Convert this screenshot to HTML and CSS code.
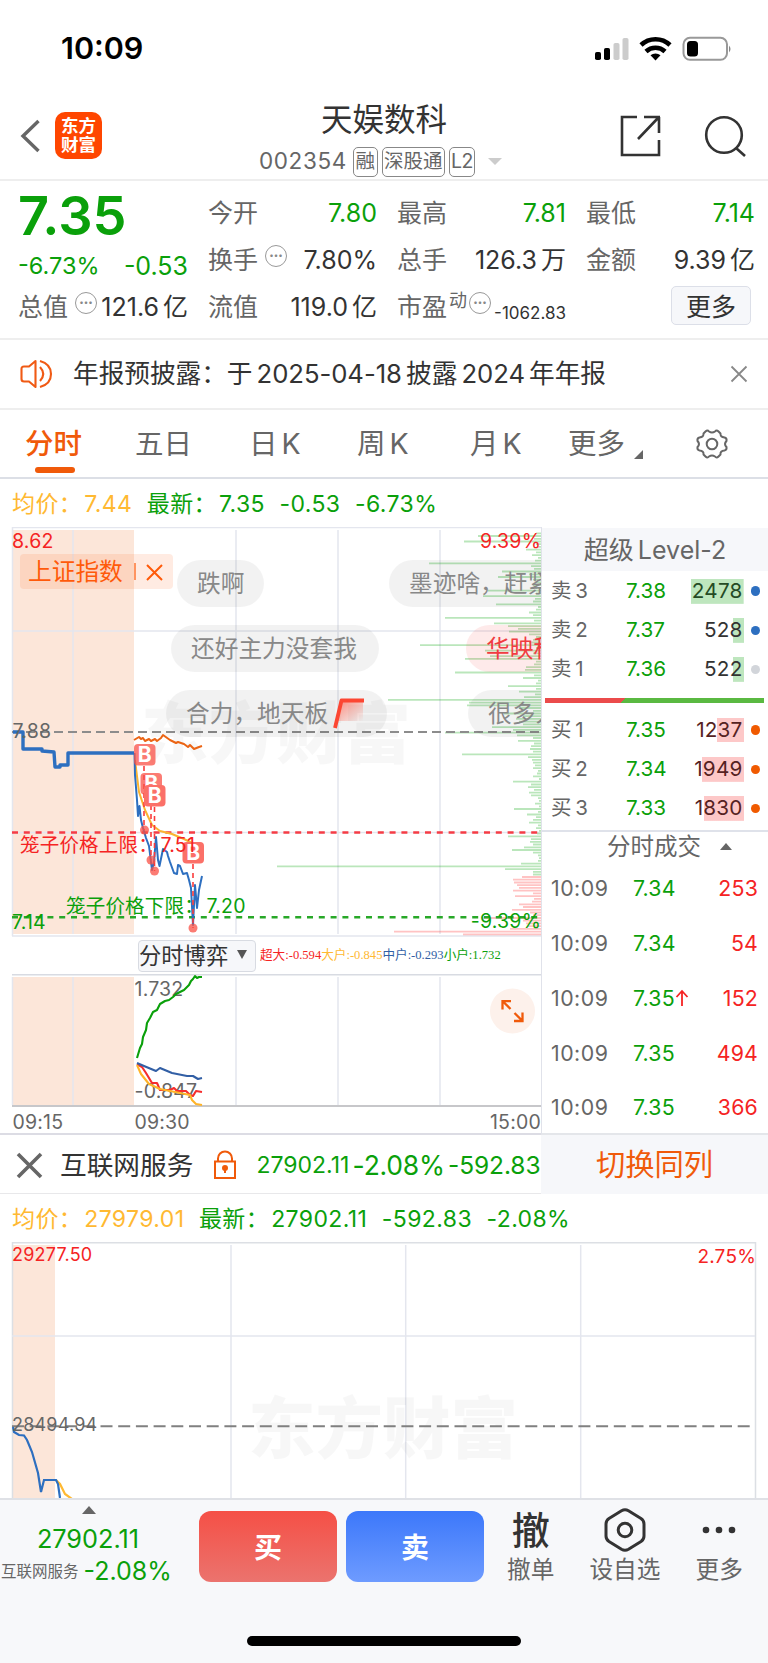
FILE: index.html
```
<!DOCTYPE html>
<html lang="zh-CN">
<head>
    <meta charset="UTF-8">
    <meta name="viewport" content="width=device-width, initial-scale=1.0">
    <title>天娱数科 002354</title>
    <link rel="stylesheet" href="styles.css">
</head>
<body>
    <div class="statusbar">
        <span class="clock">10:09</span>
        <svg width="140" height="26" viewBox="0 0 140 26">
            <rect x="1" y="16" width="6" height="8" rx="1.8"/>
            <rect x="10" y="12" width="6" height="12" rx="1.8"/>
            <rect x="19.500" y="7" width="6" height="17" rx="1.800" fill="#ccc"/>
            <rect x="28.500" y="2" width="6" height="22" rx="1.800" fill="#ccc"/>
            <g fill="none" stroke="#000" stroke-width="4.600">
                <path d="M47 9a21 21 0 0 1 29 0"/>
                <path d="M52 15.500a14 14 0 0 1 19 0"/>
            </g>
            <path d="M61.500 24.500l-5-5.200a7.500 7.500 0 0 1 10 0z"/>
            <rect x="89.500" y="1.800" width="43.500" height="22" rx="6.500" fill="none" stroke="#999" stroke-width="2"/>
            <rect x="93" y="5" width="11" height="15.500" rx="3.500"/>
            <path d="M135 9.500q3 3.300 0 7z" fill="#888"/>
        </svg>
    </div>

    <header class="header">
        <div class="header-left">
            <svg width="20" height="34" viewBox="0 0 20 34" fill="none" stroke="#666" stroke-width="3.400"><path d="M18.500 2L3 17l15.500 15"/></svg>
            <div class="logo">东方<br>财富</div>
        </div>
        <div class="header-title">
            <h1>天娱数科</h1>
            <div class="sub"><span class="code">002354</span><i>融</i><i>深股通</i><i class="l2">L2</i><b class="tri-down"></b></div>
        </div>
        <div class="header-right">
            <svg width="42" height="42" viewBox="0 0 42 42" fill="none" stroke="#333" stroke-width="2.600"><path d="M17 2H2v38h37V25M24 2h16M39 2v16M38 3L18 24"/></svg>
            <svg width="44" height="42" viewBox="0 0 44 42" fill="none" stroke="#333" stroke-width="2.600"><circle cx="20" cy="20" r="17.800"/><path d="M32 33l9 8"/></svg>
        </div>
    </header>

    <section class="quote">
        <div class="price">7.35</div>
        <div class="cell"><label>今开</label><span class="green">7.80</span></div>
        <div class="cell"><label>最高</label><span class="green">7.81</span></div>
        <div class="cell"><label>最低</label><span class="green">7.14</span></div>
        <div class="cell change green"><span>-6.73%</span><span>-0.53</span></div>
        <div class="cell"><label>换手</label><em class="dots">•••</em><span>7.80%</span></div>
        <div class="cell"><label>总手</label><span>126.3<u>万</u></span></div>
        <div class="cell"><label>金额</label><span>9.39<u>亿</u></span></div>
        <div class="cell"><label>总值</label><em class="dots">•••</em><span>121.6<u>亿</u></span></div>
        <div class="cell"><label>流值</label><span>119.0<u>亿</u></span></div>
        <div class="cell"><label>市盈</label><sup>动</sup><em class="dots">•••</em><span class="small">-1062.83</span></div>
        <div class="cell"><button class="more">更多</button></div>
    </section>

    <section class="notice">
        <svg width="34" height="30" viewBox="0 0 34 30" fill="none" stroke="#f05a14" stroke-width="2.100"><path d="M15.500 2L9 7.500H4Q1.500 7.500 1.500 10v10q0 2.500 2.500 2.500h5l6.500 5.500zM20 8q6.500 7 0 14M20 2q11 3 11 13t-11 13" stroke-linejoin="round"/></svg>
        <p>年报预披露：于 2025-04-18 披露 2024 年年报</p>
        <svg width="18" height="18" viewBox="0 0 18 18" stroke="#888" stroke-width="1.800"><path d="M1.500 1.500l15 15M16.500 1.500l-15 15"/></svg>
    </section>

    <nav class="tabs">
        <a class="active">分时</a>
        <a>五日</a>
        <a>日<span>K</span></a>
        <a>周<span>K</span></a>
        <a>月<span>K</span></a>
        <a>更多<b class="corner"></b></a>
        <svg width="34" height="32" viewBox="0 0 34 32" fill="none" stroke="#666" stroke-width="2"><path d="M10.500 3.500Q12.500 1.500 14 3.500Q17 5.500 20 3.500Q21.500 1.500 23.500 3.500L25.500 5.500Q25 9 29.500 9.500Q32 10 31.500 13Q28.500 16 31.500 19Q32 22 29.500 22.500Q25 23 25.500 26.500L23.500 28.500Q21.500 30.500 20 28.500Q17 26.500 14 28.500Q12.500 30.500 10.500 28.500L8.500 26.500Q9 23 4.500 22.500Q2 22 2.500 19Q5.500 16 2.500 13Q2 10 4.500 9.500Q9 9 8.500 5.500Z" stroke-linejoin="round"/><circle cx="17" cy="16" r="5.300"/></svg>
    </nav>

    <div class="legend green">
        <span class="yellow">均价：<span>7.44</span></span>
        <span>最新：<span>7.35</span></span>
        <span>-0.53</span>
        <span>-6.73%</span>
    </div>

    <main class="board">
        <div class="charts">
            <div class="plot">
                <svg width="541" height="410" viewBox="0 527 541 410">
                    <rect x="12" y="530" width="122" height="404" fill="#fce6d9"/>
                    <g stroke="#e4e6ee" stroke-width="1.500" fill="none">
                        <path d="M12.500 936V527.500H541M12 936H541"/>
                        <path d="M73 530V934M236 530V934M338 530V934M440 530V934M12 631H541M12 832.500H541"/>
                    </g>
                    <text x="141" y="758" class="watermark">东方财富</text>
                    <path id="sellBars" stroke="#07a40a" stroke-opacity=".28" stroke-width="1.800"/>
                    <path id="buyBars" stroke="#ff2828" stroke-opacity=".28" stroke-width="1.800"/>
                    <path d="M12 732H541" stroke="#8c8c8c" stroke-width="2" stroke-dasharray="9 5"/>
                    <path d="M12 832.500H541" stroke="#f53c46" stroke-width="2.400" stroke-dasharray="6 5.800"/>
                    <path d="M12 917.300H541" stroke="#28a828" stroke-width="2.400" stroke-dasharray="6 5.800"/>
                    <g fill="none" stroke-linejoin="round">
                        <path stroke="#eb6414" stroke-width="2" d="M134 740l5-3 2 2 2-1 2 3 4-2 2 2 4-2 2 2 4-3 2-3 7 5 6 3 2-1 6 2 4 3 2-2 4 4 5-2 3-1"/>
                        <path stroke="#fab432" stroke-width="2" d="M135 760L139 792 145 810 152 825 160 831 172 834 184 839 192 843 200 853"/>
                        <path stroke="#2d6fc0" stroke-width="3.400" d="M13 732H23V749H42V751L54 752 55 767H60V765H68V753H134"/>
                        <path stroke="#2d6fc0" stroke-width="2" d="M134.500 753L135 775 137 800 138 816 139.500 806 141 820 143 828 146 838 149 846 152 870 154 862 156 837 158 860 159.500 866 163 849 167 852 168 856 170 862 174 873 177 874 178 865 180 866 183 874 187 873 189 880 191 888 193 925 195 885 197 908 199 890 202 876"/>
                    </g>
                    <g fill="#fa5046" fill-opacity=".75">
                        <path d="M144 766V830M151 796V860M154.500 807V871M193 864V928" stroke="#fa3c3c" stroke-width="1.600" stroke-dasharray="5 4"/>
                        <circle cx="144.500" cy="830" r="4.500"/><circle cx="151" cy="860" r="4.500"/><circle cx="154.500" cy="871" r="4.500"/><circle cx="193" cy="928" r="4.500"/>
                        <rect x="134" y="744" width="21.500" height="21.500" rx="4"/><rect x="140.500" y="773" width="21.500" height="21.500" rx="4"/>
                    </g>
                    <g class="mark"><text x="144.700" y="762.300">B</text><text x="151.200" y="791.300">B</text></g>
                    <rect x="144" y="785" width="21.500" height="21.500" rx="4" fill="#fb7068"/>
                    <rect x="182.500" y="842" width="21.500" height="21.500" rx="4" fill="#fb7068"/>
                    <g class="mark"><text x="154.700" y="803.300">B</text><text x="193.200" y="860.300">B</text></g>
                    <g class="axis">
                        <text x="12" y="547.500" class="red">8.62</text>
                        <text x="541" y="547.500" class="red end">9.39%</text>
                        <text x="12.500" y="737.500">7.88</text>
                        <text x="12" y="928.500" class="green tight">7.14</text>
                        <text x="541" y="928" class="green end">-9.39%</text>
                        <text x="20" y="852" class="red">笼子价格上限：</text><text x="160.500" y="852" class="red">7.51</text>
                        <text x="66" y="913" class="green">笼子价格下限：</text><text x="206.500" y="913" class="green">7.20</text>
                    </g>
                </svg>
                <div class="index-tag">上证指数<svg width="34" height="20" viewBox="0 0 34 20" stroke="#ff5a0a" stroke-width="2" fill="none"><path d="M4 1v17" stroke-opacity=".6"/><path d="M16 3l15 15M31 3L16 18"/></svg></div>
                <span class="pill p1">跌啊</span>
                <span class="pill p2">墨迹啥，赶紧</span>
                <span class="pill p3">还好主力没套我</span>
                <span class="pill p4 hot">华映科技</span>
                <span class="pill p5">合力，地天板<svg width="34" height="34" viewBox="0 0 34 34"><defs><linearGradient id="fade" x1="0" y1="0" x2="1" y2="1"><stop offset="0" stop-color="#ff5a46" stop-opacity=".7"/><stop offset="1" stop-color="#ff5a46" stop-opacity="0"/></linearGradient></defs><path d="M8 3h23v21H4z" fill="url(#fade)"/><path d="M3 31L9.500 3.500H32" fill="none" stroke="#fc4632" stroke-width="3.800" stroke-linejoin="round"/></svg></span>
                <span class="pill p6">很多人</span>
            </div>
            <div class="game-row">
                <button>分时博弈<b class="tri-down dark"></b></button>
                <p><span class="red">超大:-0.594</span><span class="yellow">大户:-0.845</span><span class="navy">中户:-0.293</span><span class="green">小户:1.732</span></p>
            </div>
            <div class="plot">
                <svg width="541" height="161" viewBox="0 974 541 161">
                    <rect x="12" y="977" width="122" height="128" fill="#fce6d9"/>
                    <g stroke="#e4e6ee" stroke-width="1.500">
                        <path d="M12 974.700H541" stroke="#d8dbe2"/>
                        <path d="M12.500 977V1105M73 977V1105M236 977V1105M338 977V1105M440 977V1105"/>
                        <path d="M12 1106H541" stroke="#b4b4b8"/>
                    </g>
                    <g class="axis">
                        <text x="134.500" y="995.500">1.732</text>
                        <text x="134.500" y="1098">-0.847</text>
                        <text x="12.500" y="1129">09:15</text>
                        <text x="134.500" y="1129">09:30</text>
                        <text x="541" y="1129" class="end">15:00</text>
                    </g>
                    <g fill="none" stroke-width="2.100" stroke-linejoin="round">
                        <path stroke="#0aa00a" d="M137 1058L140 1048 142 1044 143 1037 146 1030 147 1023 150 1018 153 1012 157 1010 160 1004 165 1001 169 1000 173 997 176 994 184 990 189 985 191 981 193 979 195 976 197 978 199 977 202 977"/>
                        <path stroke="#f52d2d" d="M137 1064L142 1067 146 1073 152 1083 157 1083 160 1090 170 1090 174 1088 177 1091 186 1091 190 1095 193 1096 196 1091 202 1092"/>
                        <path stroke="#ffb428" d="M137 1065L141 1074 149 1084 160 1089 175 1092 190 1095 192 1100 196 1104 202 1105"/>
                        <path stroke="#325fa5" d="M137 1063L144 1066 156 1071 160 1068 172 1073 187 1076 193 1076 198 1079 202 1078"/>
                    </g>
                    <circle cx="512.500" cy="1011" r="22.500" fill="#fdf1eb"/>
                    <path d="M510.500 1009L503 1001.500M502.500 1009.500V1001.200H511M514.500 1013L522 1020.500M522.500 1012.500V1021H514" fill="none" stroke="#f05a0a" stroke-width="2.300"/>
                </svg>
            </div>
        </div>

        <aside class="level">
            <h2>超级 Level-2</h2>
            <ul class="orders">
                <li><label>卖 3</label><span class="green">7.38</span><span class="vol sell v1">2478</span><b class="blue"></b></li>
                <li><label>卖 2</label><span class="green">7.37</span><span class="vol sell v2">528</span><b class="blue"></b></li>
                <li><label>卖 1</label><span class="green">7.36</span><span class="vol sell v3">522</span><b></b></li>
            </ul>
            <div class="ratio"></div>
            <ul class="orders">
                <li><label>买 1</label><span class="green">7.35</span><span class="vol buy v4">1237</span><b class="orange"></b></li>
                <li><label>买 2</label><span class="green">7.34</span><span class="vol buy v5">1949</span><b class="orange"></b></li>
                <li><label>买 3</label><span class="green">7.33</span><span class="vol buy v6">1830</span><b class="orange"></b></li>
            </ul>
            <h3>分时成交<b class="tri-up"></b></h3>
            <ul class="ticks">
                <li><span>10:09</span><span class="green">7.34</span><span class="red">253</span></li>
                <li><span>10:09</span><span class="green">7.34</span><span class="red">54</span></li>
                <li><span>10:09</span><span class="green">7.35<svg width="14" height="18" viewBox="0 0 14 18" fill="none" stroke="#f52323" stroke-width="1.800"><path d="M7 17V2M1.500 8L7 2l5.500 6"/></svg></span><span class="red">152</span></li>
                <li><span>10:09</span><span class="green">7.35</span><span class="red">494</span></li>
                <li><span>10:09</span><span class="green">7.35</span><span class="red">366</span></li>
            </ul>
        </aside>
    </main>

    <div class="compare">
        <div class="compare-left">
            <svg width="27" height="27" viewBox="0 0 27 27" stroke="#666" stroke-width="3.600"><path d="M2 2l23 23M25 2L2 25"/></svg>
            <strong>互联网服务</strong>
            <svg width="24" height="30" viewBox="0 0 24 30" fill="none" stroke="#f05a0a" stroke-width="2"><path d="M2 11.500h20V28H2zM5 11V8.500a7 7 0 0 1 14 0V11"/><circle cx="12" cy="18" r="2" fill="#f05a0a"/><path d="M12 18v5"/></svg>
            <div class="nums green"><span>27902.11</span><span>-2.08%</span><span>-592.83</span></div>
        </div>
        <div class="switch">切换同列</div>
    </div>

    <div class="legend second green">
        <span class="yellow">均价：<span>27979.01</span></span>
        <span>最新：<span>27902.11</span></span>
        <span>-592.83</span>
        <span>-2.08%</span>
    </div>

    <svg class="sector" width="768" height="256" viewBox="0 1242 768 256">
        <rect x="12" y="1245" width="43" height="253" fill="#fce6d9"/>
        <g stroke="#e4e6ee" stroke-width="1.500" fill="none">
            <path d="M12.500 1498V1242.700H755.500V1498" stroke="#dcdfe4"/>
            <path d="M231 1245V1498M405.700 1245V1498M580.700 1245V1498M12 1336H755"/>
        </g>
        <text x="248" y="1453" class="watermark">东方财富</text>
        <path d="M12 1426.300H755" stroke="#808080" stroke-width="2" stroke-dasharray="12 5.700"/>
        <g fill="none" stroke-width="2.200">
            <path stroke="#ffb932" d="M56 1480L60 1484 65 1494 72 1499"/>
            <path stroke="#2d6fc0" d="M13 1427L14 1432 19 1435 24 1435.500 27 1440 32 1452 38 1473 41 1492 44 1480 56 1480 58 1484 60 1498"/>
        </g>
        <g class="axis small-axis">
            <text x="12" y="1261" class="red">29277.50</text>
            <text x="756" y="1262.500" class="red end pct">2.75%</text>
            <text x="12" y="1430.500">28494.94</text>
        </g>
    </svg>

    <footer class="bottom">
        <div class="trade">
            <div class="index">
                <b class="tri-up"></b>
                <div class="green big">27902.11</div>
                <div class="line"><small>互联网服务</small><span class="green">-2.08%</span></div>
            </div>
            <button class="buy-btn">买</button>
            <button class="sell-btn">卖</button>
            <div class="action a1"><div class="glyph">撤</div>撤单</div>
            <div class="action a2"><svg width="42" height="44" viewBox="0 0 42 44" fill="none" stroke="#333" stroke-width="3"><path d="M17.500 2.800Q21 .800 24.500 2.800L37 10.500Q40 12.500 40 16v12q0 3.500-3 5.500L24.500 41.200q-3.500 2-7 0L5 33.500Q2 31.500 2 28V16q0-3.500 3-5.500z"/><circle cx="21" cy="22" r="6.800"/></svg>设自选</div>
            <div class="action a3"><svg width="42" height="44" viewBox="0 0 42 44" fill="#333"><circle cx="8" cy="22" r="3.300"/><circle cx="21" cy="22" r="3.300"/><circle cx="34" cy="22" r="3.300"/></svg>更多</div>
        </div>
        <div class="home"></div>
    </footer>

    <script src="script.js"></script>
</body>
</html>
```

FILE: styles.css
```
* {
    box-sizing: border-box;
}
body {
    width: 768px;
    margin: 0;
    background: #fff;
    color: #333;
    font-family: Inter, "Noto Sans CJK SC", sans-serif;
    font-size: 24px;
    line-height: 1;
    overflow-x: hidden;
}
h1, h2, h3, p, ul {
    margin: 0;
    padding: 0;
    font-weight: 400;
}
ul { list-style: none; }
i, em, u { font-style: normal; text-decoration: none; }
svg { display: block; flex: none; }
button { font-family: inherit; padding: 0; border: 0; color: inherit; white-space: nowrap; }
span, label, strong { white-space: nowrap; }
.green { color: #0aa00a; fill: #0aa00a; }
.red { color: #f52323; fill: #f52323; }
.yellow { color: #ffb932; }
.navy { color: #325fa5; }

.tri-down, .tri-up {
    width: 0;
    height: 0;
    border: 7px solid transparent;
    border-bottom: 0;
    border-top-color: #ccc;
}
.tri-down.dark { border-width: 9px 5px 0; border-top-color: #555; }
.tri-up {
    border: 6px solid transparent;
    border-top: 0;
    border-bottom-color: #666;
}

/* status bar and header */
.statusbar {
    height: 92px;
    padding: 5px 34px 0 61px;
    display: flex;
    align-items: center;
    justify-content: space-between;
}
.clock {
    font-size: 30.500px;
    font-weight: 600;
    color: #000;
}
.header {
    height: 89px;
    padding: 0 20px;
    display: grid;
    grid-template-columns: 183px 1fr 183px;
    border-bottom: 2px solid #eee;
}
.header-left { display: flex; align-items: center; gap: 15px; }
.logo {
    width: 47px;
    height: 47px;
    border-radius: 10px;
    background: #ff4600;
    color: #fff;
    font-size: 17.5px;
    font-weight: 700;
    line-height: 19px;
    text-align: center;
    padding-top: 4px;
}
.header-title { text-align: center; padding-top: 10px; }
.header-title h1 { font-size: 31.500px; line-height: 36px; }
.sub {
    display: flex;
    align-items: center;
    margin-top: 8px;
    padding-left: 56px;
    height: 31px;
    font-size: 22.500px;
    color: #666;
}
.code { width: 94px; text-align: left; letter-spacing: .600px; }
.sub i {
    height: 30px;
    line-height: 27px;
    padding: 0 1.500px;
    margin-right: 4px;
    border: 1.500px solid #888;
    border-radius: 5px;
    font-size: 19.500px;
    white-space: nowrap;
}
.sub .l2 { padding: 0 1px; letter-spacing: -.500px; }
.sub .tri-down { margin-left: 9px; }
.header-right { display: flex; align-items: center; justify-content: flex-end; gap: 42px; }

/* quote grid */
.quote {
    height: 159px;
    padding: 8px 13px 7px 18px;
    display: grid;
    grid-template-columns: 170px repeat(3, 169px);
    grid-template-rows: 48px 47px 47px;
    column-gap: 20px;
    border-bottom: 2px solid #eee;
}
.price {
    color: #0aa00a;
    font-size: 54px;
    font-weight: 600;
    line-height: 54px;
}
.cell { display: flex; align-items: center; font-size: 25px; }
.cell label { font-size: 25px; color: #666; }
.cell > span:last-child { margin-left: auto; }
.cell u { font-size: 25px; margin-left: 4px; }
.change { padding-top: 11px; }
.change span:first-child { font-size: 23.500px; }
.dots {
    width: 22px;
    height: 22px;
    margin: -10px 0 0 7px;
    border: 1.600px solid #999;
    border-radius: 50%;
    color: #888;
    font-size: 8px;
    line-height: 18px;
    text-align: center;
}
.cell sup { font-size: 18px; color: #666; margin: -14px -5px 0 2px; line-height: 1; }
.cell .small { font-size: 17px; padding-top: 12px; }
.more {
    width: 80px;
    height: 39px;
    margin: -5px 4px 0 auto;
    background: #f6f7fa;
    border: 1.500px solid #dcdfe8;
    border-radius: 5px;
    font-size: 25px;
}

/* notice */
.notice {
    height: 70px;
    padding: 0 20px;
    display: flex;
    align-items: center;
    border-bottom: 2px solid #eee;
}
.notice p { flex: 1; padding-left: 19px; font-size: 25.700px; word-spacing: -3px; letter-spacing: -.060px; }

/* period tabs */
.tabs {
    height: 69px;
    padding: 0 0 0 25px;
    display: grid;
    grid-template-columns: 110px 114px 108px 113px 98px 127px 40px;
    align-items: center;
    border-bottom: 2px solid #dcdfe6;
    font-size: 28.500px;
    color: #666;
}
.tabs a { display: flex; align-items: center; height: 67px; padding-top: 1px; position: relative; }
.tabs a span { margin-left: 4px; }
.tabs .active { color: #f05a0a; font-weight: 500; }
.tabs .active::after {
    content: "";
    position: absolute;
    left: 10px;
    bottom: 4px;
    width: 40px;
    height: 6px;
    border-radius: 3px;
    background: #f05a0a;
}
.corner {
    align-self: flex-end;
    margin: 0 0 18px 9px;
    border-left: 9px solid transparent;
    border-bottom: 9px solid #666;
}

.legend {
    height: 48px;
    padding: 2px 12px 0;
    display: flex;
    align-items: center;
    gap: 14.500px;
    font-size: 23px;
    letter-spacing: .400px;
}
.legend span span { margin-left: 2px; }

/* chart board */
.board { display: flex; height: 608px; }
.charts { width: 541px; border-bottom: 2px solid #dcdce4; }
.plot { position: relative; overflow: hidden; }
.axis { font-size: 19.500px; fill: #666; letter-spacing: .200px; }
.small-axis { font-size: 18px; }
.pct { font-size: 19px; }
.end { text-anchor: end; }
.watermark { font: 900 67.500px "Noto Sans CJK SC", sans-serif; fill: #000; fill-opacity: .03; }
.mark { font-size: 21px; font-weight: 700; fill: #fff; text-anchor: middle; }
.index-tag {
    position: absolute;
    left: 20px;
    top: 27px;
    width: 153px;
    height: 35px;
    padding-left: 8px;
    display: flex;
    align-items: center;
    gap: 8px;
    border-radius: 4px;
    background: rgba(255, 90, 20, .12);
    color: #ff5a0a;
    font-size: 23.700px;
    white-space: nowrap;
}
.pill {
    position: absolute;
    height: 47px;
    padding: 0 20px;
    display: flex;
    align-items: center;
    border-radius: 24px;
    background: rgba(0, 0, 0, .05);
    color: #888;
    font-size: 23.700px;
}
.pill svg { margin-left: 4px; }
.hot { background: rgba(245, 50, 50, .1); color: #f03c41; }
.p1 { left: 177px; top: 33px; width: 87px; }
.p2 { left: 389px; top: 33px; }
.p3 { left: 171px; top: 98px; width: 208px; }
.p4 { left: 466px; top: 98px; }
.p5 { left: 166px; top: 163px; width: 221px; }
.p6 { left: 468px; top: 163px; }

.game-row {
    height: 37px;
    padding: 3px 0 3px 138px;
    display: flex;
    align-items: center;
    gap: 4px;
}
.game-row button {
    width: 118px;
    height: 32px;
    padding-bottom: 3px;
    display: flex;
    align-items: center;
    gap: 9px;
    background: #f6f7fa;
    border: 1.500px solid #d8dbe2;
    border-radius: 4px;
    font-size: 22.300px;
}
.game-row p { font-family: "Liberation Serif", "Noto Sans CJK SC", serif; font-size: 12.600px; display: flex; }

/* level-2 panel */
.level { width: 227px; border-left: 1.500px solid #e0e2ea; border-bottom: 2px solid #e4e6ea; }
.level h2 {
    height: 43px;
    margin-top: 1px;
    line-height: 44px;
    background: #f6f7fa;
    color: #666;
    font-size: 25px;
    word-spacing: -3px;
    text-align: center;
}
.orders li {
    height: 39.300px;
    padding: 1px 8px 0 9px;
    display: flex;
    align-items: center;
    font-size: 20.700px;
}
.orders label { width: 75px; color: #666; font-size: 20.500px; word-spacing: -2px; }
.orders b { width: 9.500px; height: 9.500px; border-radius: 50%; background: #d2d5da; margin-left: 7px; }
.orders .blue { background: #2d6fc0; }
.orders .orange { background: #f05a00; }
.vol { margin-left: auto; padding: 2px 1px; letter-spacing: .200px; background-repeat: no-repeat; background-position: right center; }
.sell { background-image: linear-gradient(#bee6be, #bee6be); color: #254a25; }
.buy { background-image: linear-gradient(#fdc8c8, #fdc8c8); color: #522; }
.v1 { background-size: 54px 100%; }
.v2, .v3 { background-size: 11px 100%; color: #333; }
.v4 { background-size: 27px 100%; }
.v5 { background-size: 42px 100%; }
.v6 { background-size: 40px 100%; }
.ratio {
    height: 5px;
    margin: 9px 4px 7px 3px;
    background: linear-gradient(135deg, #eb4b4b 0 57px, #5ab941 57px);
}
.level h3 {
    height: 31px;
    margin-top: 2px;
    padding-left: 65px;
    display: flex;
    align-items: center;
    gap: 19px;
    border-top: 2px solid #dfe2ea;
    color: #666;
    font-size: 23.500px;
}
.level h3 .tri-up { border-bottom-width: 7px; }
.ticks { padding-top: 1px; }
.ticks li {
    height: 54.700px;
    padding: 0 10px 0 9px;
    display: flex;
    align-items: center;
    font-size: 21.300px;
    letter-spacing: .200px;
    color: #666;
}
.ticks li span:first-child { width: 82px; letter-spacing: .500px; }
.ticks li span:last-child { margin-left: auto; }
.ticks .green { display: flex; align-items: center; }

/* sector comparison */
.compare { display: flex; height: 59px; }
.compare-left {
    width: 541px;
    padding: 2px 0 0 16px;
    display: flex;
    align-items: center;
    border-bottom: 1.500px solid #e8e8ea;
}
.compare strong { margin: 0 20px 0 17px; font-size: 26.700px; font-weight: 400; }
.nums { display: flex; align-items: center; justify-content: space-between; width: 284px; margin-left: 19px; }
.nums span { font-size: 23px; }
.nums span:nth-child(2) { font-size: 26.500px; letter-spacing: -.200px; }
.nums span:nth-child(3) { font-size: 24.500px; letter-spacing: -.100px; }
.switch {
    flex: 1;
    line-height: 60px;
    text-align: center;
    background: #f6f7fa;
    color: #f05a0a;
    font-size: 29.300px;
}

/* bottom bar */
.bottom {
    height: 165px;
    border-top: 2px solid #dfe1e6;
    background: #f7f8fa;
}
.trade { display: flex; padding-top: 11px; height: 100px; }
.index { width: 199px; }
.index .tri-up { display: block; margin: -5px 0 0 82px; border-width: 0 7px 8px; }
.big { margin-top: 12px; font-size: 25.300px; text-align: center; width: 176px; }
.line { display: flex; align-items: center; gap: 5px; margin-top: 8px; padding-left: 1px; }
.line small { font-size: 15.500px; color: #666; white-space: nowrap; }
.line span { font-size: 25px; }
.trade button {
    width: 138px;
    height: 71px;
    padding-bottom: 2px;
    margin-right: 9px;
    border-radius: 12px;
    color: #fff;
    font-size: 28px;
    font-weight: 700;
}
.buy-btn { background: linear-gradient(#f55046, #eb736e); }
.sell-btn { background: linear-gradient(#3c78fa, #6e9bff); }
.action {
    display: flex;
    flex-direction: column;
    align-items: center;
    color: #666;
    font-size: 23.700px;
    white-space: nowrap;
}
.action svg { margin: -3px 0 6px; }
.glyph { height: 47px; line-height: 38px; font-size: 38px; font-weight: 500; color: #333; }
.a1 { margin-left: 14px; }
.a2 { margin-left: 35px; }
.a3 { margin-left: 35px; }
.home {
    width: 274px;
    height: 10px;
    margin: 36px auto 0;
    border-radius: 5px;
    background: #000;
}
```

FILE: script.js
```
// price distribution bars, one length per price level, drawn from the right edge
const RIGHT = 541;
const STEP = 2.73;

const sell = [
    5, 63, 7, 77, 5, 3, 15, 5, 9, 3, 6, 112, 10, 7, 39, 12, 43, 8, 5, 8, 5, 53, 5, 58, 6, 8, 45, 3, 5, 12,
    8, 96, 7, 47, 33, 23, 32, 12, 5, 8, 12, 121, 5, 56, 8, 51, 76, 5, 7, 15, 16, 86, 7, 18, 3, 5, 33, 5, 22, 6,
    17, 153, 72, 74, 22, 8, 37, 18, 25, 22, 18, 49, 28, 96,
    24, 8, 23, 7, 10, 11, 8, 79, 13, 9, 8, 6, 8, 3, 4, 8, 2, 28, 10, 13, 7, 12, 10, 3, 2, 6, 2, 27, 3, 14, 5,
    8, 12, 3, 5, 2, 4, 33, 10, 11, 8, 17, 29, 8, 3, 2, 3, 20, 264, 36, 8, 8
];
const buy = [19, 28, 27, 24, 22, 28, 8, 26, 7, 9, 22, 18, 29, 11, 8, 59, 18, 15, 13, 31, 147, 78];

function bars(lengths, top) {
    return lengths.map((len, i) => `M${RIGHT} ${(top + i * STEP).toFixed(1)}h-${len}`).join('');
}

document.getElementById('sellBars').setAttribute('d', bars(sell, 533.3));
document.getElementById('buyBars').setAttribute('d', bars(buy, 877));
```
